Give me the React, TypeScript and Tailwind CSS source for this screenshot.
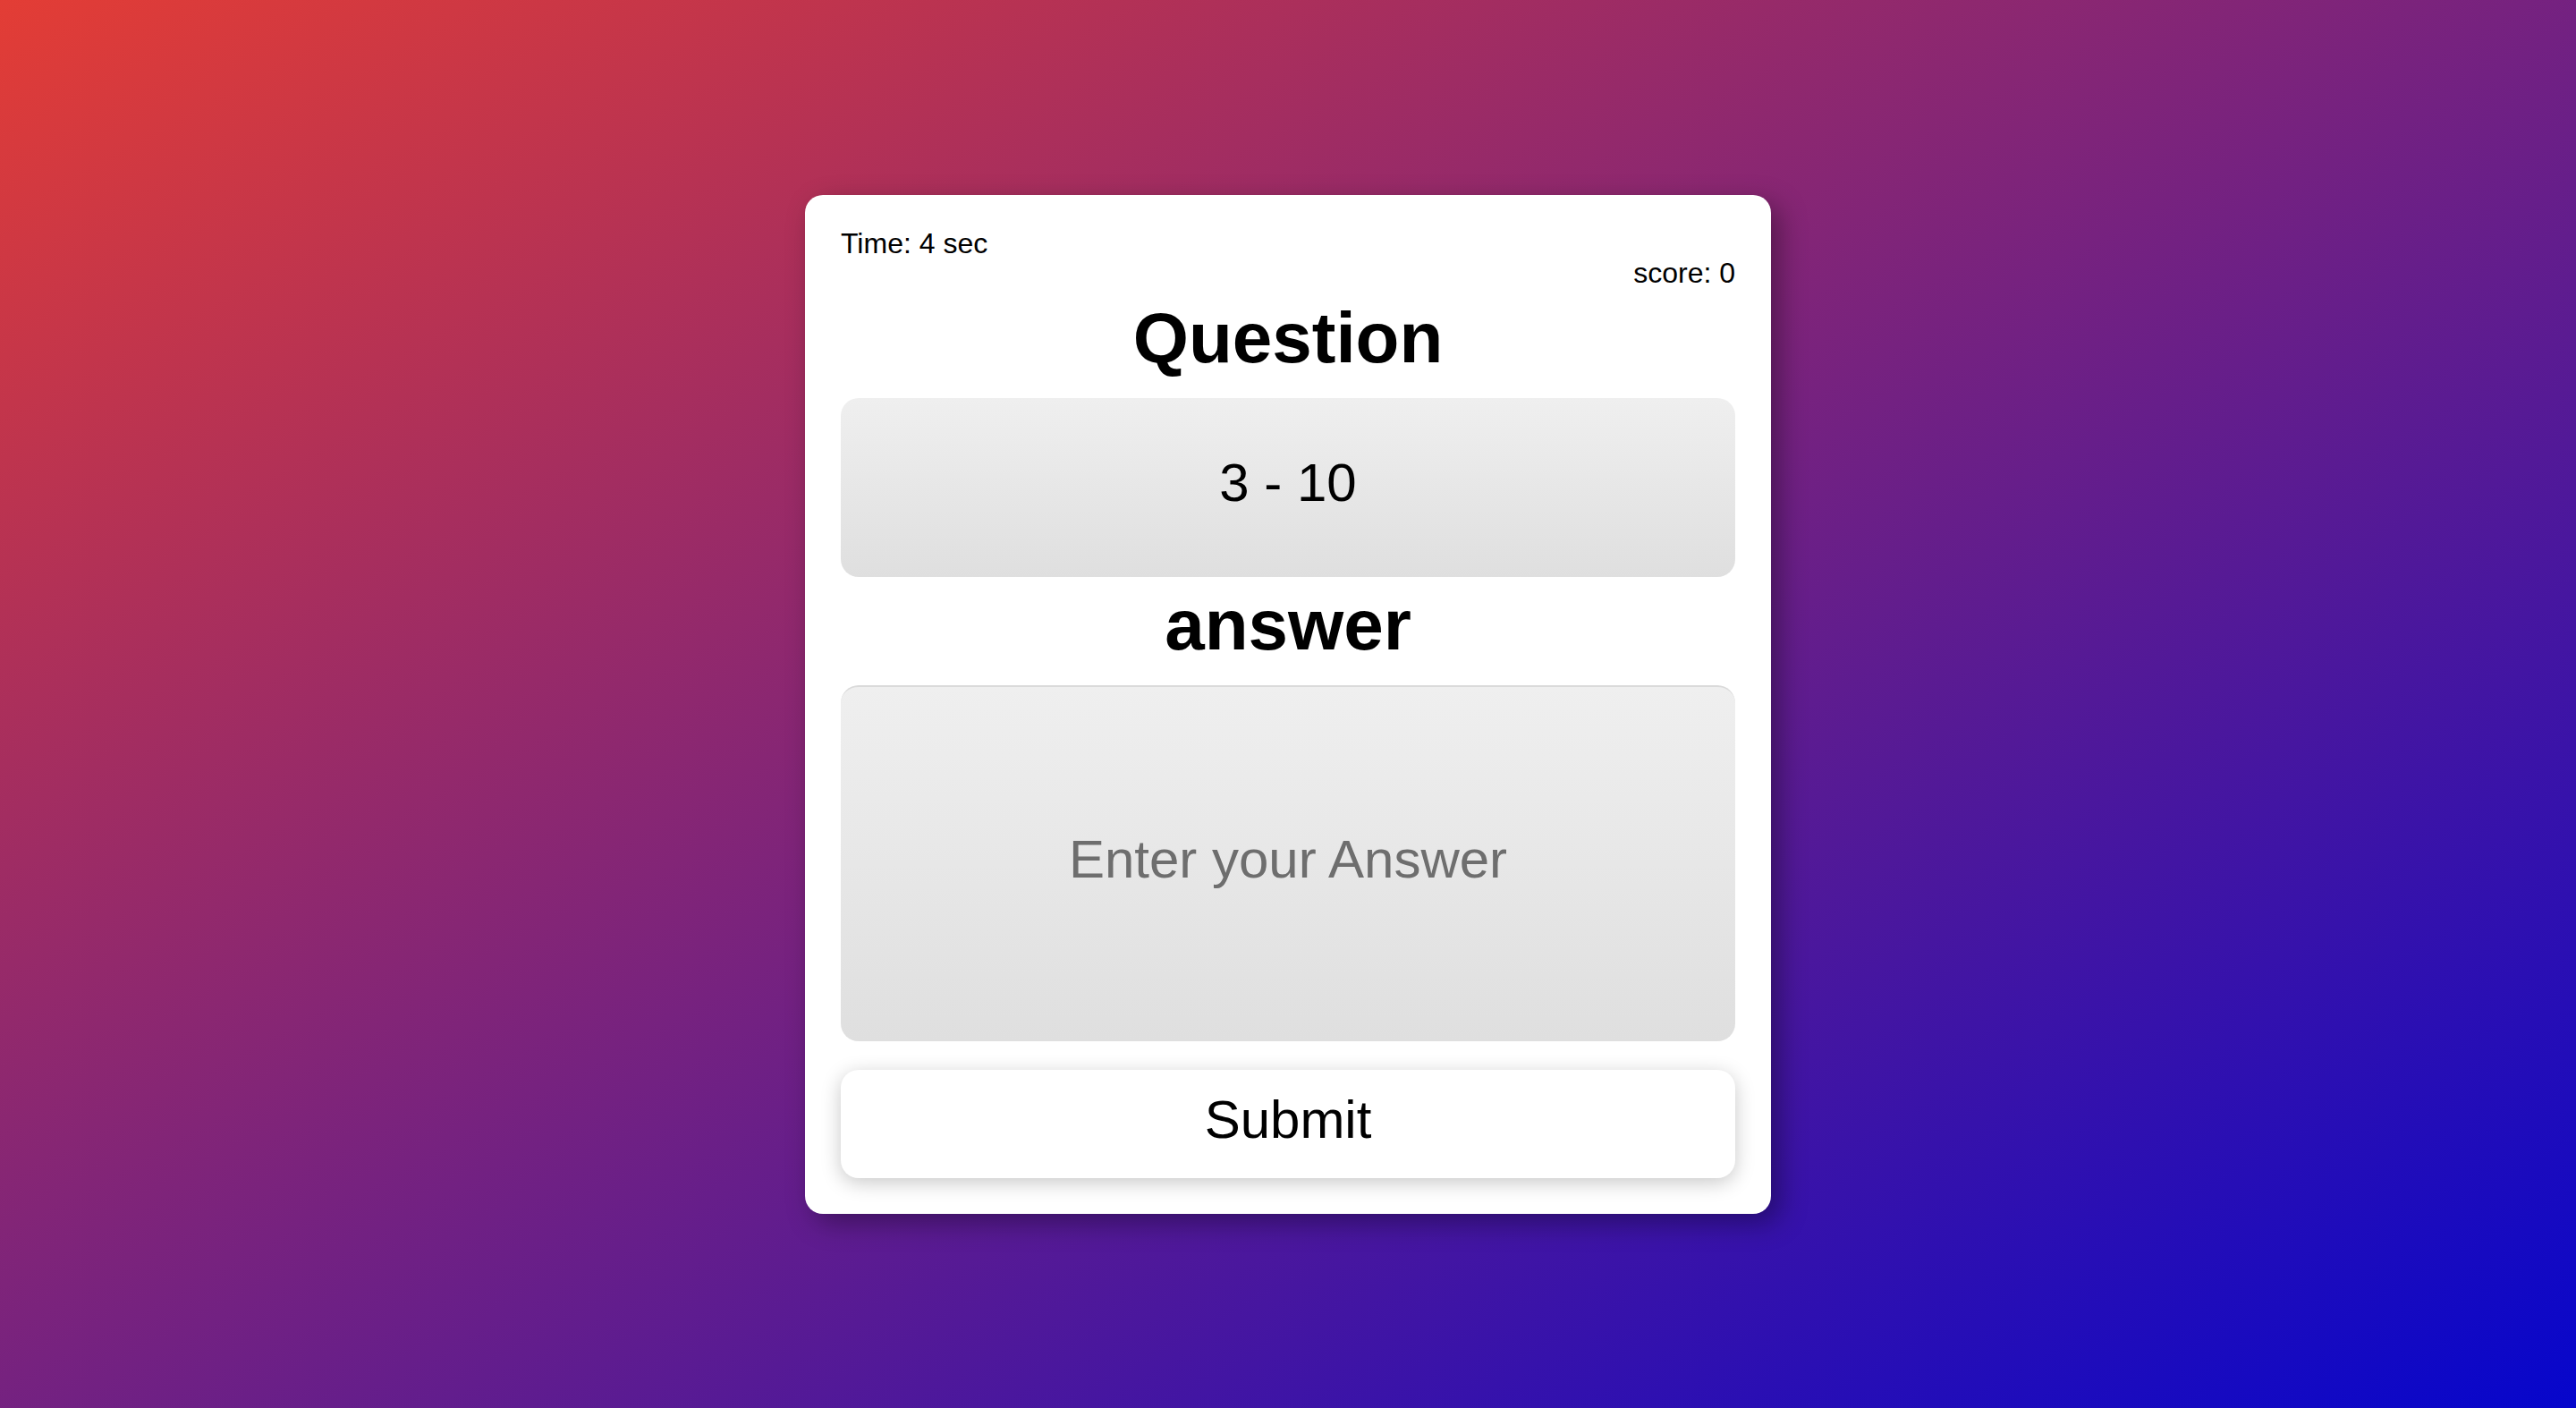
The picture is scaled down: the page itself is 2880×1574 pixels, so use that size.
import { useState } from "react";

// Quick mental-math quiz card over a red → blue diagonal wash.
export default function App() {
  const [answer, setAnswer] = useState("");
  const time = 4;
  const score = 0;

  return (
    <div className="flex min-h-screen items-center justify-center bg-[linear-gradient(to_bottom_right,#e33d35,#0606cc)] font-['Liberation_Sans',Arial,sans-serif] text-black">
      <div className="flex w-[1080px] flex-col rounded-[20px] bg-white px-[40px] pt-[36px] pb-[40px] shadow-[10px_10px_30px_rgba(0,0,0,0.35)]">
        <div className="text-[32px] leading-[36px]">Time: {time} sec</div>
        <div className="-mt-[3px] text-right text-[32px] leading-[36px]">score: {score}</div>

        <h1 className="mt-[9px] text-center text-[80px] leading-[92px] font-bold">
          Question
        </h1>
        <div className="mt-[21px] flex h-[200px] items-center justify-center rounded-[20px] bg-[linear-gradient(to_bottom,#efefef,#dfdfdf)] pb-[9px] text-[60px]">
          3 - 10
        </div>

        <h2 className="mt-[8px] text-center text-[80px] leading-[92px] font-bold">
          answer
        </h2>
        <input
          type="text"
          value={answer}
          onChange={(e) => setAnswer(e.target.value)}
          placeholder="Enter your Answer"
          className="mt-[21px] h-[398px] w-full rounded-[20px] border-t-2 border-[#dadada] bg-[linear-gradient(to_bottom,#efefef,#dfdfdf)] pb-[10px] text-center text-[60px] outline-none placeholder:text-[#6e6e6e]"
        />

        <button
          type="button"
          className="mt-[32px] flex h-[121px] w-full items-center justify-center rounded-[20px] bg-white pb-[8px] text-[60px] shadow-[0_5px_22px_rgba(0,0,0,0.22)]"
        >
          Submit
        </button>
      </div>
    </div>
  );
}
